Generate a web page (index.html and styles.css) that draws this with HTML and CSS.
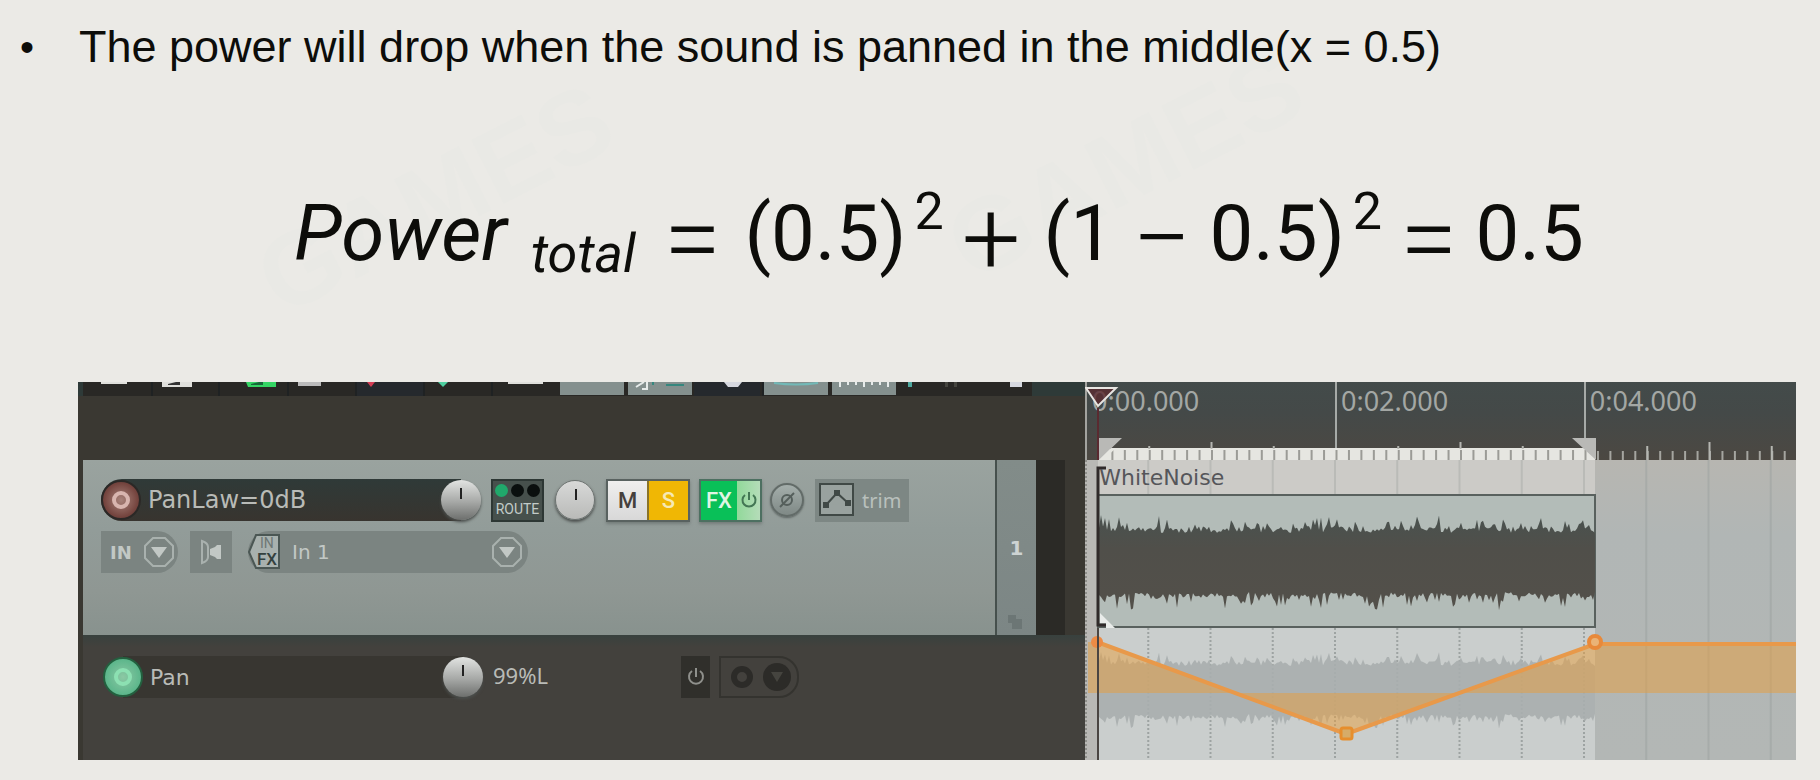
FILE: index.html
```
<!DOCTYPE html>
<html lang="en">
<head>
<meta charset="utf-8">
<title>Pan law: power in the middle</title>
<link rel="stylesheet" href="styles.css">
</head>
<body>
<main class="slide">
  <div class="watermarks" aria-hidden="true">
    <span class="mark mark-a">GAMES</span>
    <span class="mark mark-b">GAMES</span>
  </div>

  <ul class="points">
    <li><span class="bullet">•</span><span>The power will drop when the sound is panned in the middle(x = 0.5)</span></li>
  </ul>

  <p class="formula">
    <span><i>Power</i></span><sub><i>total</i></sub>
    <span class="op">=</span>
    <span class="term">(0.5)</span><sup>2</sup>
    <span class="op">+</span>
    <span class="term">(1</span><span class="op">−</span><span>0.5)</span><sup>2</sup>
    <span class="op">=</span>
    <span>0.5</span>
  </p>

  <section class="daw" aria-label="Track editor">
    <div class="mixer">
      <svg class="toolbar" viewBox="0 0 1007 14" preserveAspectRatio="none" aria-hidden="true">
        <path fill="#292825" d="M5 0H954V14H5z"/>
        <path fill="#1f2223" d="M73 0h2v14h-2zM140 0h2v14h-2zM209 0h2v14h-2zM277 0h2v14h-2zM345 0h2v14h-2zM413 0h2v14h-2zM684 0h2v14h-2z"/>
        <path fill="#25292d" d="M279 0h66v14h-66zM616 0h66v14h-66z"/>
        <path fill="#e0e0dc" d="M23 0h26v2H23zM84 0h30v5h-4H84zM430 0h35v2h-35z"/>
        <path fill="#333" d="M90 2l8-2h4v3H90z"/>
        <path fill="#35d564" d="M168 0h30v5h-28z"/>
        <path fill="#17683a" d="M173 2l8-2h4v3h-12z"/>
        <path fill="#bbb" d="M220 0h23v4h-23z"/>
        <path fill="#d53e55" d="M289 0h8l-4 5z"/>
        <path fill="#4fd0a0" d="M360 0h10l-5 5z"/>
        <path fill="#84908e" d="M482 0h64v13h-64zM550 0h64v13h-64zM686 0h64v13h-64zM754 0h64v13h-64z"/>
        <path stroke="#e6ebea" stroke-width="2" fill="none" d="M558 5l8-5M564 7h5V0M762 0v5M770 0v3M778 0v3M786 0v5M794 0v3M802 0v3M810 0v5"/>
        <path stroke="#36877e" stroke-width="2" fill="none" d="M588 3h18M575 0v3"/>
        <path stroke="#72b9b7" stroke-width="2" fill="none" d="M696 1q22 3 44 0"/>
        <path fill="#d6d8df" d="M646 0h18l-4 5h-10zM932 0h12v5h-12z"/>
        <path fill="#4fa9a0" d="M830 0h4v5h-4z"/>
        <path fill="#45453f" d="M867 0h3v5h-3zM876 0h3v5h-3z"/>
      </svg>

      <div class="track">
        <div class="controls">
          <div class="row">
            <div class="name-field">
              <button class="arm" aria-label="Record arm"><span></span></button>
              <input class="name" type="text" value="PanLaw=0dB" aria-label="Track name">
              <button class="knob" aria-label="Volume"></button>
            </div>
            <button class="route"><span class="dots"><i class="on"></i><i></i><i></i></span>ROUTE</button>
            <button class="knob pale" aria-label="Track pan"></button>
            <div class="pair">
              <button class="mute">M</button><button class="solo">S</button>
            </div>
            <div class="pair fx-pair">
              <button class="fx">FX</button><button class="fx-power" aria-label="FX bypass"><svg width="20" height="20" viewBox="0 0 20 20"><path d="M6 5a6.500 6.500 0 1 0 8 0M10 2v8"/></svg></button>
            </div>
            <button class="phase" aria-label="Phase"><svg width="20" height="20" viewBox="0 0 20 20"><circle cx="10" cy="10" r="5"/><path d="M3 17L17 3"/></svg></button>
            <button class="trim"><svg width="36" height="34" viewBox="0 0 36 34"><rect x="1" y="1" width="33" height="31"/><path d="M7 22L18 10L29 20"/><path class="nodes" d="M4 19h6v6H4zM15 7h6v6h-6zM26 17h6v6h-6z"/></svg>trim</button>
          </div>
          <div class="row inputs">
            <button class="in">IN <svg class="octagon" width="32" height="32" viewBox="0 0 32 32"><path d="M10 2h12l8 8v12l-8 8H10l-8-8V10z"/><path class="solid" d="M8 11h16l-8 11z"/></svg></button>
            <button class="monitor" aria-label="Monitor"><svg width="24" height="26" viewBox="0 0 24 26"><path d="M3 2q6 2 6 6v10q0 4-6 6z"/><path class="solid" d="M11 10l5-2l2-2h4v14h-4l-2-2l-5-2z"/></svg></button>
            <button class="source"><svg class="infx" width="34" height="36" viewBox="0 0 34 36"><path class="plate" d="M8 1H31V34H8L1 18z"/><text x="12" y="14">IN</text><text x="9" y="31" class="dark">FX</text></svg><span>In 1</span><svg class="octagon" width="32" height="32" viewBox="0 0 32 32"><path d="M10 2h12l8 8v12l-8 8H10l-8-8V10z"/><path class="solid" d="M8 11h16l-8 11z"/></svg></button>
          </div>
        </div>
        <div class="number">1<svg width="20" height="18" viewBox="0 0 20 18" aria-hidden="true"><path d="M2 2h8v4h6v10H6V10H2z"/></svg></div>
        <div class="meter"></div>
      </div>

      <div class="envelope">
        <div class="env-field">
          <button class="arm green" aria-label="Envelope arm"><span></span></button>
          <input class="name" type="text" value="Pan" aria-label="Envelope name">
          <button class="knob" aria-label="Pan value"></button>
        </div>
        <span class="value">99%L</span>
        <button class="env-power" aria-label="Envelope bypass"><svg width="20" height="20" viewBox="0 0 20 20"><path d="M6 4a7 7 0 1 0 8 0M10 1v9"/></svg></button>
        <button class="env-mode" aria-label="Envelope mode"><svg width="74" height="38" viewBox="0 0 74 38"><circle cx="20" cy="19" r="8"/><circle class="solid" cx="55" cy="19" r="14"/><path d="M49 14h12l-6 10z"/></svg></button>
      </div>
    </div>

    <div class="timeline">
      <div class="ruler">
        <svg id="ruler" viewBox="0 0 711 78" preserveAspectRatio="none" aria-hidden="true"></svg>
        <span class="time t0">0:00.000</span>
        <span class="time t2">0:02.000</span>
        <span class="time t4">0:04.000</span>
        <svg class="cursor" width="36" height="78" viewBox="0 0 36 78" aria-hidden="true"><path fill="#5a2a30" fill-opacity=".8" stroke="#e8e6e2" stroke-width="2" d="M1 6H31L13 24z"/><path stroke="#5a2a30" stroke-width="2" d="M13 26V78"/></svg>
      </div>
      <div class="lane">
        <svg id="lane" viewBox="0 0 711 300" preserveAspectRatio="none" aria-hidden="true"></svg>
        <span class="clip">WhiteNoise</span>
      </div>
    </div>
  </section>
</main>
<script src="timeline.js"></script>
</body>
</html>
```
FILE: styles.css
```
* { box-sizing: border-box; }
body { margin: 0; background: #ebeae6; color: #0d0d0a; font-family: "Liberation Sans", Arial, sans-serif; }
button { border: 0; padding: 0; background: none; font: inherit; color: inherit; }
svg { display: block; flex: none; }

.slide { position: relative; min-height: 100vh; padding: 21px 24px 21px 20px; }
.watermarks { position: absolute; inset: 0; }
.mark { position: absolute; font-size: 104px; line-height: 110px; font-weight: bold; color: #e9e9e5; transform: rotate(-27deg); transform-origin: left bottom; }
.mark-a { left: 290px; top: 224px; }
.mark-b { left: 980px; top: 190px; }

.points { position: relative; list-style: none; margin: 0; padding: 0; font-size: 45px; line-height: 52px; }
.points li { display: flex; }
.bullet { flex: none; width: 59px; font-size: 40px; }

.formula { position: relative; display: flex; align-items: baseline; margin: 115px 0 0 274px; font: 78px/92px Roboto, sans-serif; }
.formula sub, .formula sup { font-size: 52px; line-height: 1; vertical-align: baseline; position: relative; }
.formula sub { top: 12px; margin: 0 10px 0 24px; font-size: 54px; }
.formula sup { top: -31px; margin-left: 8px; }
.op { position: relative; top: 14px; margin: 0 18px; font-size: 104px; font-weight: 300; line-height: 60px; }
.term { margin-left: 5px; }

.daw { position: relative; display: grid; grid-template-columns: 1007fr 711fr; margin: 102px 0 0 58px; background: #3a3832; }

.mixer { min-width: 0; background: #3a3832; }
.toolbar { width: 100%; height: 14px; margin-bottom: 64px; background: #2e3a38; }
.track { display: flex; height: 175px; margin-left: 5px; }
.controls { flex: 1; padding: 19px 0 0 18px; background: linear-gradient(#9aa39f, #929c99 40%, #8f9793 75%, #88928e); }
.row { display: flex; align-items: center; height: 42px; }
.name-field { display: flex; align-items: center; height: 42px; width: 380px; border-radius: 21px; background: linear-gradient(90deg, transparent 360px, #979f9c 360px), linear-gradient(#2f3a38, #38342f); }
.arm { flex: none; width: 40px; height: 40px; border-radius: 50%; border: 2px solid #2b2826; background: radial-gradient(#a8837b, #75453f 65%, #57302c); display: grid; place-items: center; }
.arm span { width: 18px; height: 18px; border-radius: 50%; border: 4px solid #d8b5af; }
.arm.green { border-color: #23603f; background: radial-gradient(#8cc8a4, #5cb68b 70%, #59a87f); }
.arm.green span { border-color: #8ce0b2; }
.name { flex: 1; min-width: 0; border: 0; padding: 0 0 0 7px; background: none; color: #b9bbb7; font: 24px "DejaVu Sans", sans-serif; }
.env-field .name { font-size: 22px; }
.knob { flex: none; position: relative; width: 40px; height: 40px; border-radius: 50%; background: linear-gradient(#e2e4e2, #a6a8a6 55%, #6d6f6d); box-shadow: 0 2px 3px #4b4f4d; }
.knob::after { content: ""; position: absolute; left: 19px; top: 8px; width: 2px; height: 11px; background: #222; }
.knob.pale { background: linear-gradient(#d8d9d8, #b9bab8); border: 1px solid #6d7371; }
.route { width: 53px; height: 43px; margin: 0 11px 0 10px; border: 2px solid #2d3734; background: #46504c; color: #c2cbc8; font: 14px/18px Roboto, sans-serif; }
.dots { display: flex; justify-content: space-around; height: 17px; padding: 1px; }
.dots i { width: 13px; height: 13px; border-radius: 50%; background: #0a0f0e; }
.dots .on { background: #20a86b; }
.pair { display: flex; height: 43px; width: 84px; margin-left: 11px; border: 2px solid #596260; box-shadow: 0 2px 3px #747c7a; font: 500 22px Roboto, sans-serif; }
.pair button { flex: 1; }
.mute { background: linear-gradient(#f0efee, #d8d8d8); color: #45403c; }
.pair .solo { border-left: 2px solid #8a7428; background: #f0b704; color: #f6e9b4; }
.fx-pair { width: 63px; margin-left: 9px; border-color: #4d7061; }
.pair .fx { flex: none; width: 36px; background: #09c058; color: #dff5e4; }
.fx-power { display: grid; place-items: center; background: linear-gradient(90deg, #91d99a, #b5dcb9); }
.fx-power svg, .env-power svg { fill: none; stroke: #437654; stroke-width: 2; }
.phase { display: grid; place-items: center; width: 34px; height: 34px; margin-left: 8px; border-radius: 50%; border: 2px solid #626b68; background: linear-gradient(#a4aeab, #7f8986); box-shadow: 0 1px 2px #5d6563; }
.phase svg { fill: none; stroke: #555f5c; stroke-width: 2; }
.trim { display: flex; align-items: center; gap: 7px; width: 94px; height: 43px; margin-left: 11px; padding-left: 4px; background: #7d8784; color: #b9c0bd; font: 20px "Noto Sans", sans-serif; }
.trim svg { fill: #99a29f; stroke: #404946; stroke-width: 2; }
.trim .nodes { fill: #404946; stroke: none; }

.inputs { margin-top: 10px; color: #c2c8c5; font: 20px "DejaVu Sans", sans-serif; }
.inputs button { display: flex; align-items: center; height: 42px; background: #7b8481; }
.inputs .in { width: 77px; justify-content: space-between; padding: 0 3px 0 9px; border-radius: 0 21px 21px 0; font-weight: bold; font-size: 18px; }
.inputs .monitor { width: 42px; margin: 0 16px 0 12px; justify-content: center; }
.inputs .source { width: 280px; padding-right: 5px; border-radius: 21px; }
.source span { flex: 1; padding-left: 10px; text-align: left; }
.octagon, .monitor svg { fill: none; stroke: #a9b1ae; stroke-width: 2; }
.octagon .solid, .monitor .solid { fill: #c2c8c5; stroke: none; }
.infx .plate { fill: #a8b1ae; stroke: #4b5754; stroke-width: 2; }
.infx text { fill: #6d7774; stroke: none; font: 14px Roboto, sans-serif; }
.infx .dark { fill: #34413e; font: 500 17px Roboto, sans-serif; }

.number { position: relative; display: grid; place-items: center; width: 41px; border-left: 2px solid #46504d; background: linear-gradient(#828c89, #7c8685); color: #cdd3d3; font: bold 20px "DejaVu Sans", sans-serif; }
.number svg { position: absolute; right: 10px; bottom: 4px; fill: #6c7675; }
.meter { width: 29px; margin-right: 20px; background: #2b2a26; }

.envelope { display: flex; align-items: flex-start; height: 125px; padding: 21px 0 0 20px; border-left: 5px solid #3a3832; background: linear-gradient(#38413e, #43413d 12px); }
.env-field { display: flex; align-items: center; width: 380px; height: 42px; background: linear-gradient(90deg, transparent 20px, #383631 20px 360px, transparent 360px); }
.envelope .value { width: 178px; padding-left: 10px; color: #b9bbb7; font: 22px/38px "Noto Sans", sans-serif; }
.env-power { display: grid; place-items: center; width: 29px; height: 42px; margin: 0 9px 0 20px; background: #302f2b; }
.env-power svg { stroke: #8f908c; }
.env-mode { display: grid; place-items: center; width: 80px; height: 42px; border: 2px solid #34332f; border-radius: 0 20px 20px 0; }
.env-mode svg { fill: none; stroke: #2c2b28; stroke-width: 6; }
.env-mode .solid { fill: #2c2b28; stroke: none; }
.env-mode path { fill: #45443f; stroke: none; }

.timeline { min-width: 0; }
.ruler, .lane { position: relative; }
.ruler > svg:first-child { width: 100%; height: 78px; }
.lane > svg { width: 100%; height: 300px; }
.time { position: absolute; top: 1px; color: #a3a7a4; font: 27px/36px "Noto Sans", sans-serif; }
.t0 { left: 1%; }
.t2 { left: 36%; }
.t4 { left: 71%; }
.cursor { position: absolute; left: 0; top: 0; }
.clip { position: absolute; left: 2%; top: 3px; color: #55565a; font: 22px/30px "DejaVu Sans", sans-serif; }
```
FILE: timeline.js
```
const STEP = 62.25, START = 13, END = 510, WIDTH = 711;

const rect = (x, y, w, h, fill, extra = "") =>
  `<rect x="${x}" y="${y}" width="${w}" height="${h}" fill="${fill}" ${extra}/>`;

function drawRuler() {
  let s = `<defs><linearGradient id="rg" x2="0" y2="1"><stop offset="0" stop-color="#434b4a"/><stop offset=".4" stop-color="#444948"/><stop offset="1" stop-color="#4c4842"/></linearGradient></defs>`;
  s += rect(0, 0, WIDTH, 78, "url(#rg)") + rect(0, 0, 2, 78, "#a3a39f");
  s += rect(START, 66, END - START, 12, "#e6e6e1");
  for (let i = 1; i < 58; i++) {
    const x = 1.5 + i * STEP / 5;
    if (x < START + 12) continue;
    if (x < END) s += rect(x, 68, 2, 10, "#9b9b96");
    else s += rect(x, 69, 2, 9, "#a5a5a0");
  }
  for (let i = 1; i < 12; i++) {
    const x = 1 + i * STEP;
    if (i % 4 === 0) s += rect(x, 0, 2, 66, "#a6aaa7");
    else {
      const top = i % 2 ? 64 : 60;
      s += rect(x, top, 2, (x > END ? 78 : 67) - top, "#b5b6b1");
    }
  }
  s += `<path fill="#b9b9b6" d="M14 56H37L14 78zM487 56H511V78z"/>`;
  s += `<path fill="#e6e6e1" d="M25 67H30L18 78H14z"/>`;
  document.getElementById("ruler").innerHTML = s;
}

function noise(seed) {
  let v = seed;
  return () => (v = (v * 16807) % 2147483647) / 2147483647;
}

function wave(top, bottom, height) {
  const r = noise(4242);
  let up = "", down = "";
  for (let x = START + 1; x < END; x += 2) {
    const a = Math.pow(r(), 4) * height + r() * 5;
    const b = Math.pow(r(), 4) * height + r() * 5;
    up += `L${x} ${(top - a).toFixed(1)}`;
    down = `L${x} ${(bottom + b).toFixed(1)}` + down;
  }
  return `M${START} ${top}${up}L${END} ${top}V${bottom}${down}L${START} ${bottom}z`;
}

function drawLane() {
  let s = `<defs>
    <linearGradient id="out" x2="0" y2="1"><stop offset="0" stop-color="#b7b6b1"/><stop offset=".25" stop-color="#b1b6b5"/><stop offset="1" stop-color="#b3b7b5"/></linearGradient>
    <linearGradient id="wf" x2="0" y2="1"><stop offset="0" stop-color="#49524f"/><stop offset=".35" stop-color="#504f4a"/><stop offset="1" stop-color="#53504a"/></linearGradient></defs>`;
  s += rect(0, 0, WIDTH, 300, "url(#out)");
  s += rect(0, 0, START, 300, "#b9b8b5");
  s += rect(START, 0, END - START, 36, "#cccbc7");
  s += rect(START, 168, END - START, 132, "#cacecd");
  for (let i = 1; i < 12; i++) {
    const x = 1 + i * STEP;
    s += x < END
      ? `<path d="M${x} 0V36" stroke="#aaaca8" stroke-width="2" opacity=".5"/><path d="M${x} 168V300" stroke="#8f9594" stroke-width="2" stroke-dasharray="2 2" opacity=".75"/>`
      : `<path d="M${x} 0V300" stroke="#999f9e" stroke-width="2" opacity=".45"/>`;
  }
  s += rect(START, 35, END - START, 132, "#b3bcb8", 'stroke="#59615e" stroke-width="2"');
  s += `<path d="${wave(73, 132, 14)}" fill="url(#wf)"/>`;
  s += `<path d="${wave(206, 254, 10)}" fill="#a9aeae" opacity=".9"/>`;
  s += `<path d="M3 182H12L150 233H3zM150 233L261 274L373 233zM373 233L510 183H711V233z" fill="#e79d3c" opacity=".5"/>`;
  s += `<path d="M12 182L261 274L510 184H711" fill="none" stroke="#e8994a" stroke-width="4"/>`;
  s += `<circle cx="12" cy="182" r="6" fill="#ed8b45"/>`;
  s += `<rect x="256" y="268" width="11" height="11" rx="2" fill="#d6ac69" stroke="#e68e2d" stroke-width="3"/>`;
  s += `<circle cx="510" cy="182" r="6" fill="#eab377" stroke="#e8893a" stroke-width="4"/>`;
  s += `<path d="M21 8H13V165H21" fill="none" stroke="#302a2a" stroke-width="3"/><path d="M13 168V300" stroke="#4b4542" stroke-width="2"/>`;
  s += `<path d="M15 153L30 168H21V163H15z" fill="#e9ecea"/>`;
  s += `<path d="M1 0V300" stroke="#8f8f8b" stroke-width="2" stroke-dasharray="2 2"/>`;
  document.getElementById("lane").innerHTML = s;
}

drawRuler();
drawLane();
```
